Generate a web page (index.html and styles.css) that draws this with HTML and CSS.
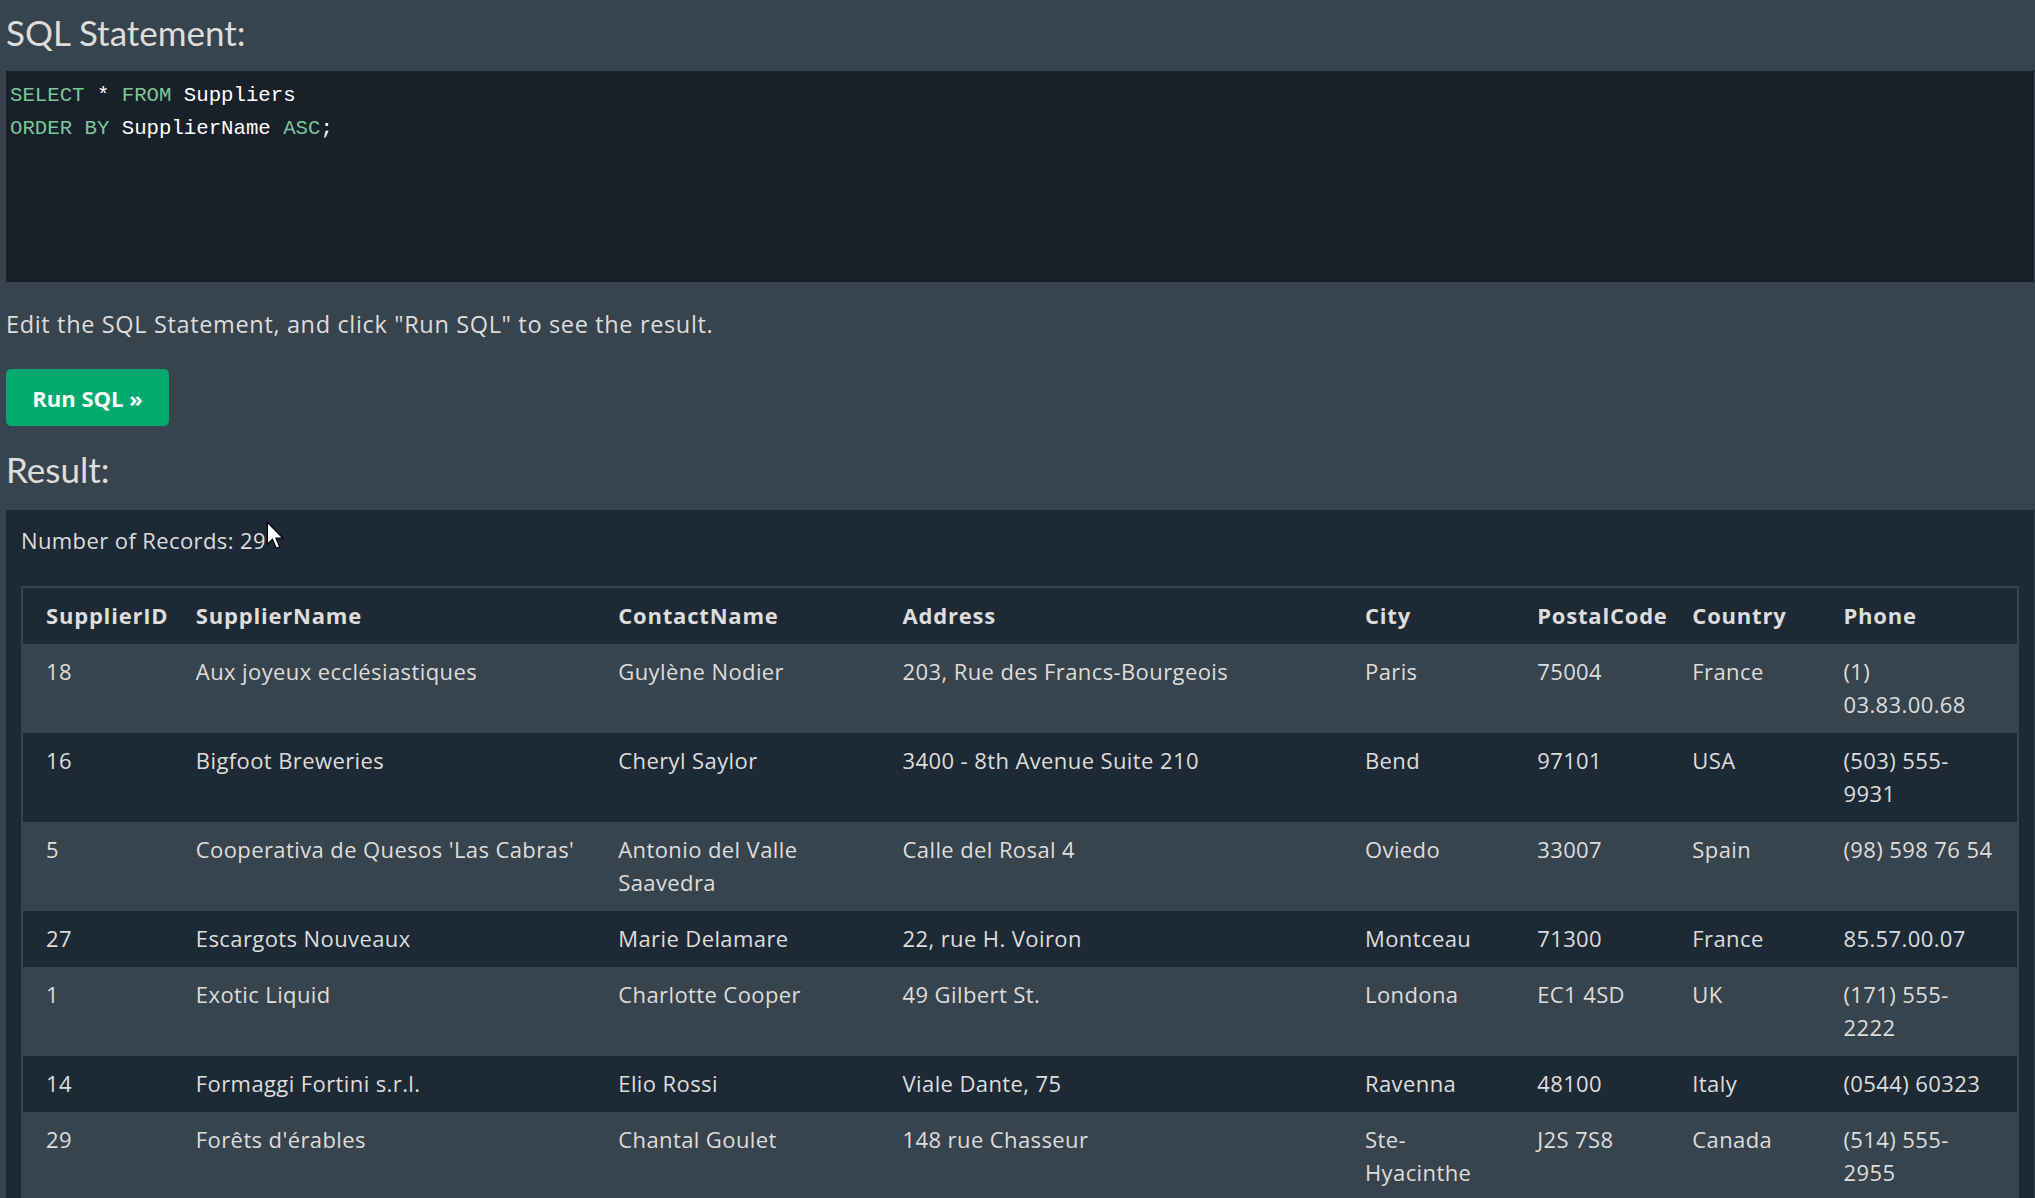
FILE: index.html
```html
<!DOCTYPE html>
<html lang="en">
<head>
<meta charset="utf-8">
<title>SQL Tryit</title>
<link rel="stylesheet" href="styles.css">
</head>
<body>
<div class="page">
  <h3 class="heading heading-sql">SQL Statement:</h3>
  <div class="code"><div class="code-line"><span class="kw">SELECT</span> * <span class="kw">FROM</span> <span class="id">Suppliers</span></div><div class="code-line"><span class="kw">ORDER BY</span> <span class="id">SupplierName</span> <span class="kw">ASC</span>;</div></div>
  <p class="hint">Edit the SQL Statement, and click "Run SQL" to see the result.</p>
  <button class="run-btn" type="button">Run SQL »</button>
  <h3 class="heading heading-result">Result:</h3>
  <div class="result">
    <div class="records">Number of Records: 29</div>
    <table class="data">
      <colgroup>
        <col class="c1"><col class="c2"><col class="c3"><col class="c4"><col class="c5"><col class="c6"><col class="c7"><col class="c8">
      </colgroup>
      <thead>
        <tr><th>SupplierID</th><th>SupplierName</th><th>ContactName</th><th>Address</th><th>City</th><th>PostalCode</th><th>Country</th><th>Phone</th></tr>
      </thead>
      <tbody>
        <tr><td>18</td><td>Aux joyeux ecclésiastiques</td><td>Guylène Nodier</td><td>203, Rue des Francs-Bourgeois</td><td>Paris</td><td>75004</td><td>France</td><td>(1)<br>03.83.00.68</td></tr>
        <tr><td>16</td><td>Bigfoot Breweries</td><td>Cheryl Saylor</td><td>3400 - 8th Avenue Suite 210</td><td>Bend</td><td>97101</td><td>USA</td><td>(503) 555-<br>9931</td></tr>
        <tr><td>5</td><td>Cooperativa de Quesos 'Las Cabras'</td><td>Antonio del Valle<br>Saavedra</td><td>Calle del Rosal 4</td><td>Oviedo</td><td>33007</td><td>Spain</td><td>(98) 598 76 54</td></tr>
        <tr><td>27</td><td>Escargots Nouveaux</td><td>Marie Delamare</td><td>22, rue H. Voiron</td><td>Montceau</td><td>71300</td><td>France</td><td>85.57.00.07</td></tr>
        <tr><td>1</td><td>Exotic Liquid</td><td>Charlotte Cooper</td><td>49 Gilbert St.</td><td>Londona</td><td>EC1 4SD</td><td>UK</td><td>(171) 555-<br>2222</td></tr>
        <tr><td>14</td><td>Formaggi Fortini s.r.l.</td><td>Elio Rossi</td><td>Viale Dante, 75</td><td>Ravenna</td><td>48100</td><td>Italy</td><td>(0544) 60323</td></tr>
        <tr><td>29</td><td>Forêts d'érables</td><td>Chantal Goulet</td><td>148 rue Chasseur</td><td>Ste-<br>Hyacinthe</td><td>J2S 7S8</td><td>Canada</td><td>(514) 555-<br>2955</td></tr>
        <tr><td>24</td><td>G'day, Mate</td><td>Wendy Mackenzie</td><td>170 Prince Edward Parade Hunter's Hill</td><td>Sydney</td><td>2042</td><td>Australia</td><td>(02) 555-<br>5914</td></tr>
        <tr><td>28</td><td>Gai pâturage</td><td>Eliane Noz</td><td>Bat. B 3, rue des Alpes</td><td>Annecy</td><td>74000</td><td>France</td><td>38.76.98.06</td></tr>
      </tbody>
    </table>
  </div>
</div>
<svg class="cursor" width="19" height="30" viewBox="0 0 14 22" aria-hidden="true">
  <path d="M1 1 L1 17 L4.8 13.4 L7.6 20 L10 19 L7.3 12.6 L12.4 12.6 Z" fill="#fff" stroke="#000" stroke-width="0.9"/>
</svg>
</body>
</html>
```

FILE: styles.css
```css
html, body {
  margin: 0;
  padding: 0;
  background: #38444d;
}
body {
  position: relative;
  color: #ddd;
  font-family: "Open Sans", "Noto Sans", Lato, sans-serif;
  font-size: 22px;
  line-height: 33px;
  letter-spacing: 0.4px;
  overflow: hidden;
}
.page {
  padding: 6.5px 1px 0 6px;
}
.heading {
  margin: 0;
  font-family: Lato, "Open Sans", sans-serif;
  font-size: 35px;
  line-height: 50px;
  font-weight: 400;
  letter-spacing: 0;
  color: #ddd;
}
.heading-sql {
  margin-bottom: 14.5px;
}
.code {
  background: #18202a;
  height: 211px;
  box-sizing: border-box;
  padding: 8px 4px;
  font-family: "Liberation Mono", "DejaVu Sans Mono", monospace;
  font-size: 20.7px;
  line-height: 33px;
  letter-spacing: 0;
  color: #fff;
}
.kw { color: #7ec699; }
.id { color: #fff; }
.hint {
  margin: 26px 0 28px;
  font-size: 23.5px;
  letter-spacing: 0.65px;
}
.run-btn {
  display: block;
  width: 163px;
  height: 57px;
  border: 0;
  border-radius: 5px;
  background: #04aa6d;
  color: #fff;
  font-family: inherit;
  font-size: 22px;
  font-weight: 700;
  letter-spacing: 0;
  padding: 0;
  margin: 0 0 18px;
}
.heading-result {
  margin-bottom: 16px;
}
.result {
  background: #1d2a35;
  padding: 13.5px 0 0 15px;
  height: 800px;
}
.records {
  margin-bottom: 29.4px;
}
.data {
  border-collapse: collapse;
  table-layout: fixed;
  width: 1998px;
  border: 2px solid #38444d;
}
.c1 { width: 162px; }
.c2 { width: 422px; }
.c3 { width: 284px; }
.c4 { width: 462px; }
.c5 { width: 172px; }
.c6 { width: 155px; }
.c7 { width: 151px; }
.c8 { width: 186px; }
.data th, .data td {
  text-align: left;
  vertical-align: top;
  padding: 11.5px 11.7px;
  white-space: nowrap;
}
.data th:first-child, .data td:first-child {
  padding-left: 23px;
}
.data th {
  font-weight: 700;
  letter-spacing: 0.8px;
  background: #1d2a35;
}
.data tbody tr:nth-child(odd) td {
  background: #38444d;
}
.data tbody tr:nth-child(even) td {
  background: #1d2a35;
}
.cursor {
  position: absolute;
  left: 266px;
  top: 521px;
}
```
